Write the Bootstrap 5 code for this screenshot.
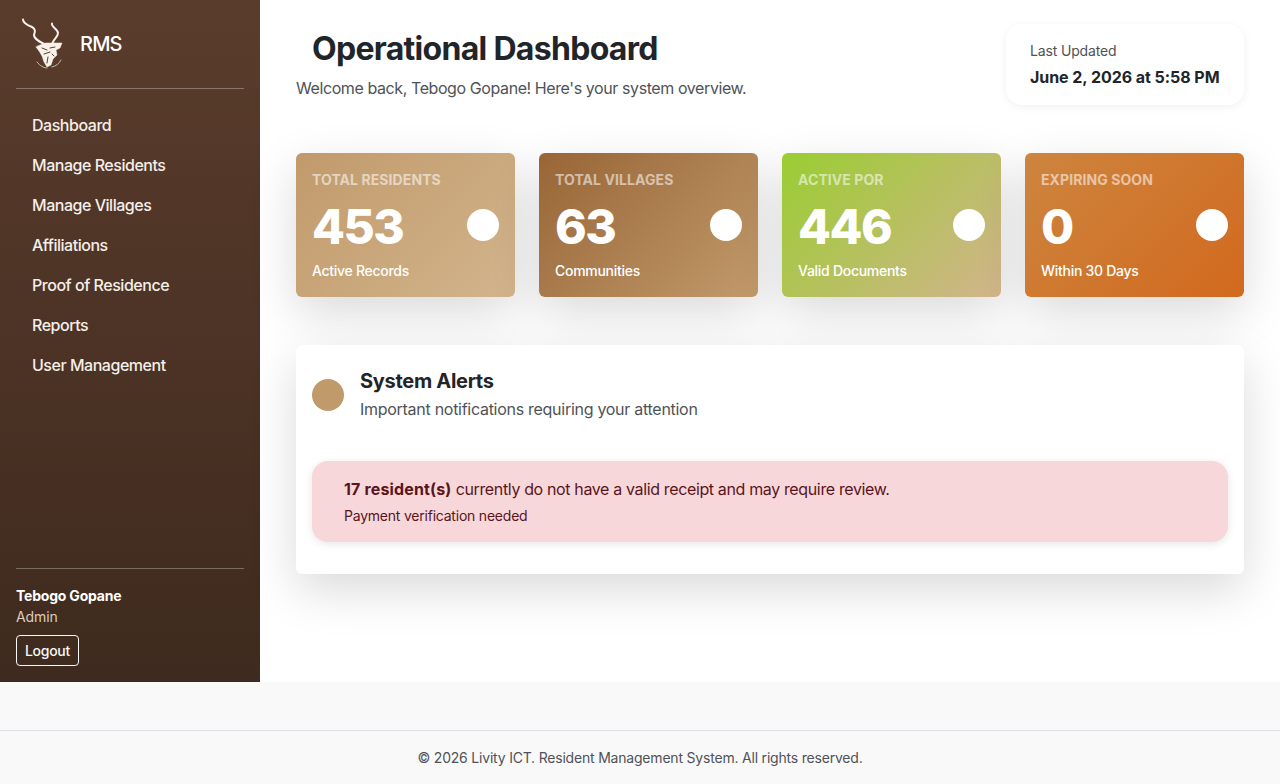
<!DOCTYPE html>
<html lang="en">
<head>
  <meta charset="UTF-8" />
  <meta name="viewport" content="width=device-width, initial-scale=1.0"/>
  <title>Operational Dashboard</title>
  <link href="https://cdn.jsdelivr.net/npm/bootstrap@5.3.0/dist/css/bootstrap.min.css" rel="stylesheet"/>
  <style>
    body { font-family: Inter, "Liberation Sans", sans-serif; background: #f9f9fa; color: #212529; height: 784px; overflow: hidden; }
    .app-shell { height: 682px; background: #fff; }
    .side-panel { width: 260px; flex: 0 0 260px; padding: 0 16px; background: linear-gradient(180deg, #5a3c2c, #3e2a1e); color: #fff; }
    .brand-row { height: 89px; border-bottom: 1px solid rgba(255,255,255,.3); padding-left: 6px; gap: 14px; }
    .brand-name { font-size: 20px; font-weight: 500; letter-spacing: -.8px; }
    .side-links { padding-top: 16px; }
    .side-links .nav-link { color: #f5efe9; font-size: 16px; font-weight: 500; letter-spacing: -.47px; height: 40px; padding: 8px 16px; line-height: 24px; }
    .user-box { border-top: 1px solid rgba(255,255,255,.3); padding-top: 17px; height: 114px; }
    .user-name { font-size: 14px; font-weight: 700; line-height: 20px; letter-spacing: -.2px; }
    .user-role { font-size: 14px; line-height: 20px; color: #dccdbf; margin-top: 1px; letter-spacing: -.1px; }
    .logout-btn { font-size: 14px; font-weight: 500; line-height: 21px; padding: 4px 8px; margin-top: 8px; border-radius: 4px; letter-spacing: -.3px; }
    .main-area { padding: 24px 36px 0; min-width: 0; }
    .page-head { height: 81px; margin-bottom: 48px; }
    .page-title { font-size: 32px; font-weight: 700; line-height: 48px; padding: 1px 0 0 16px; margin: 0; letter-spacing: -.7px; }
    .page-sub { font-size: 16px; color: #4f5357; margin: 3px 0 0; line-height: 24px; letter-spacing: -.41px; }
    .updated-box { width: 238px; height: 81px; border-radius: 16px; padding: 16px 24px; box-shadow: 0 2px 10px rgba(0,0,0,.06); }
    .updated-label { font-size: 14px; color: #4f5357; line-height: 21px; letter-spacing: -.15px; }
    .updated-when { font-size: 16px; font-weight: 700; line-height: 24px; margin-top: 4px; letter-spacing: -.05px; white-space: nowrap; }
    .stat-row { display: grid; grid-template-columns: repeat(4, 1fr); gap: 24px; margin-bottom: 48px; }
    .stat-tile { height: 144px; border-radius: 6px; padding: 16px; color: #fff; box-shadow: 0 16px 48px rgba(0,0,0,.15); border: 0; }
    .tile-a { background: linear-gradient(135deg, #c19a6b, #d2b48c); }
    .tile-b { background: linear-gradient(135deg, #986536, #c19a6b); }
    .tile-c { background: linear-gradient(135deg, #9acd32, #d2b48c); }
    .tile-d { background: linear-gradient(135deg, #cd853f, #d2691e); }
    .tile-label { font-size: 14px; font-weight: 700; text-transform: uppercase; line-height: 21px; opacity: .55; letter-spacing: .08px; }
    .tile-num { font-size: 48px; font-weight: 800; line-height: 58px; margin-top: 8px; letter-spacing: -1.6px; }
    .tile-dot { width: 32px; height: 32px; border-radius: 50%; background: #fff; margin-top: 4px; }
    .tile-note { font-size: 14px; font-weight: 500; line-height: 21px; margin-top: 4px; letter-spacing: -.28px; }
    .alert-panel { height: 229px; border-radius: 6px; padding: 16px; border: 0; box-shadow: 0 16px 48px rgba(0,0,0,.15); }
    .alert-dot { width: 32px; height: 32px; border-radius: 50%; background: #c19a6b; }
    .alert-title { font-size: 20px; font-weight: 700; line-height: 30px; margin: 0; letter-spacing: -.3px; }
    .alert-sub { font-size: 16px; color: #4f5357; line-height: 24px; margin: 1px 0 3px; letter-spacing: -.28px; }
    .head-row { height: 68px; margin-bottom: 32px; gap: 16px; }
    .receipt-alert { height: 81px; border-radius: 16px; padding: 16px 32px; margin: 0; background: #f8d7da; border: 0; color: #58151c; box-shadow: 0 2px 8px rgba(0,0,0,.1); }
    .receipt-main { font-size: 16px; line-height: 24px; letter-spacing: -.36px; }
    .receipt-main strong { letter-spacing: .15px; }
    .receipt-note { font-size: 14px; line-height: 21px; margin-top: 4px; letter-spacing: -.22px; }
    .page-foot { margin-top: 48px; height: 54px; border-top: 1px solid #dee2e6; font-size: 14px; color: #4f5357; line-height: 54px; letter-spacing: -.2px; }
  </style>
</head>
<body>

  <div class="app-shell d-flex">
    <aside class="side-panel d-flex flex-column">
      <div class="brand-row d-flex align-items-center">
        <svg width="44" height="52" viewBox="0 0 44 52" fill="none" stroke="#f7f1ea" stroke-linecap="round" stroke-linejoin="round">
          <path d="M1 1.5C1 5 5 7 10 9C14 11 13 14 12 17C12 21 18 24 24 27" stroke-width="2"/>
          <path d="M30 5.5C29 9 36 11 36 15C36 19 32 21 31 24L29 28" stroke-width="2"/>
          <path d="M14 20C17 24 20 25 23 26" stroke-width=".7"/>
          <path d="M18 27L24 25L32 25L40 25L38 30L34 32L35 37L31 41L29 47L25 49L22 44L20 38L17 33L14 29Z" fill="#f7f1ea" stroke-width=".5"/>
          <path d="M20 30L25 32M28 30L33 29M22 36L28 34M26 39L25 45M30 36L32 38" stroke="#5a3c2c" stroke-width="1"/>
          <path d="M15 44C18 48 22 50 25 50M39 42C37 46 34 48 30 49" stroke-width=".7"/>
        </svg>
        <span class="brand-name">RMS</span>
      </div>
      <nav class="nav flex-column side-links flex-grow-1">
        <a class="nav-link" href="#">Dashboard</a>
        <a class="nav-link" href="#">Manage Residents</a>
        <a class="nav-link" href="#">Manage Villages</a>
        <a class="nav-link" href="#">Affiliations</a>
        <a class="nav-link" href="#">Proof of Residence</a>
        <a class="nav-link" href="#">Reports</a>
        <a class="nav-link" href="#">User Management</a>
      </nav>
      <div class="user-box">
        <div class="user-name">Tebogo Gopane</div>
        <div class="user-role">Admin</div>
        <button class="btn btn-outline-light logout-btn">Logout</button>
      </div>
    </aside>

    <main class="main-area flex-grow-1">
      <div class="page-head d-flex justify-content-between">
        <div>
          <h1 class="page-title">Operational Dashboard</h1>
          <p class="page-sub">Welcome back, Tebogo Gopane! Here's your system overview.</p>
        </div>
        <div class="updated-box bg-white">
          <div class="updated-label">Last Updated</div>
          <div class="updated-when">June 2, 2026 at 5:58 PM</div>
        </div>
      </div>

      <div class="stat-row">
        <div class="card stat-tile tile-a">
          <div class="tile-label">Total Residents</div>
          <div class="d-flex justify-content-between align-items-center">
            <div class="tile-num">453</div><div class="tile-dot"></div>
          </div>
          <div class="tile-note">Active Records</div>
        </div>
        <div class="card stat-tile tile-b">
          <div class="tile-label">Total Villages</div>
          <div class="d-flex justify-content-between align-items-center">
            <div class="tile-num">63</div><div class="tile-dot"></div>
          </div>
          <div class="tile-note">Communities</div>
        </div>
        <div class="card stat-tile tile-c">
          <div class="tile-label">Active POR</div>
          <div class="d-flex justify-content-between align-items-center">
            <div class="tile-num">446</div><div class="tile-dot"></div>
          </div>
          <div class="tile-note">Valid Documents</div>
        </div>
        <div class="card stat-tile tile-d">
          <div class="tile-label">Expiring Soon</div>
          <div class="d-flex justify-content-between align-items-center">
            <div class="tile-num">0</div><div class="tile-dot"></div>
          </div>
          <div class="tile-note">Within 30 Days</div>
        </div>
      </div>

      <div class="card alert-panel">
        <div class="head-row d-flex align-items-center">
          <div class="alert-dot flex-shrink-0"></div>
          <div>
            <h5 class="alert-title">System Alerts</h5>
            <p class="alert-sub">Important notifications requiring your attention</p>
          </div>
        </div>
        <div class="alert receipt-alert">
          <div class="receipt-main"><strong>17 resident(s)</strong> currently do not have a valid receipt and may require review.</div>
          <div class="receipt-note">Payment verification needed</div>
        </div>
      </div>
    </main>
  </div>

  <footer class="page-foot text-center">© 2026 Livity ICT. Resident Management System. All rights reserved.</footer>

  <script src="https://cdn.jsdelivr.net/npm/bootstrap@5.3.0/dist/js/bootstrap.bundle.min.js"></script>
</body>
</html>
